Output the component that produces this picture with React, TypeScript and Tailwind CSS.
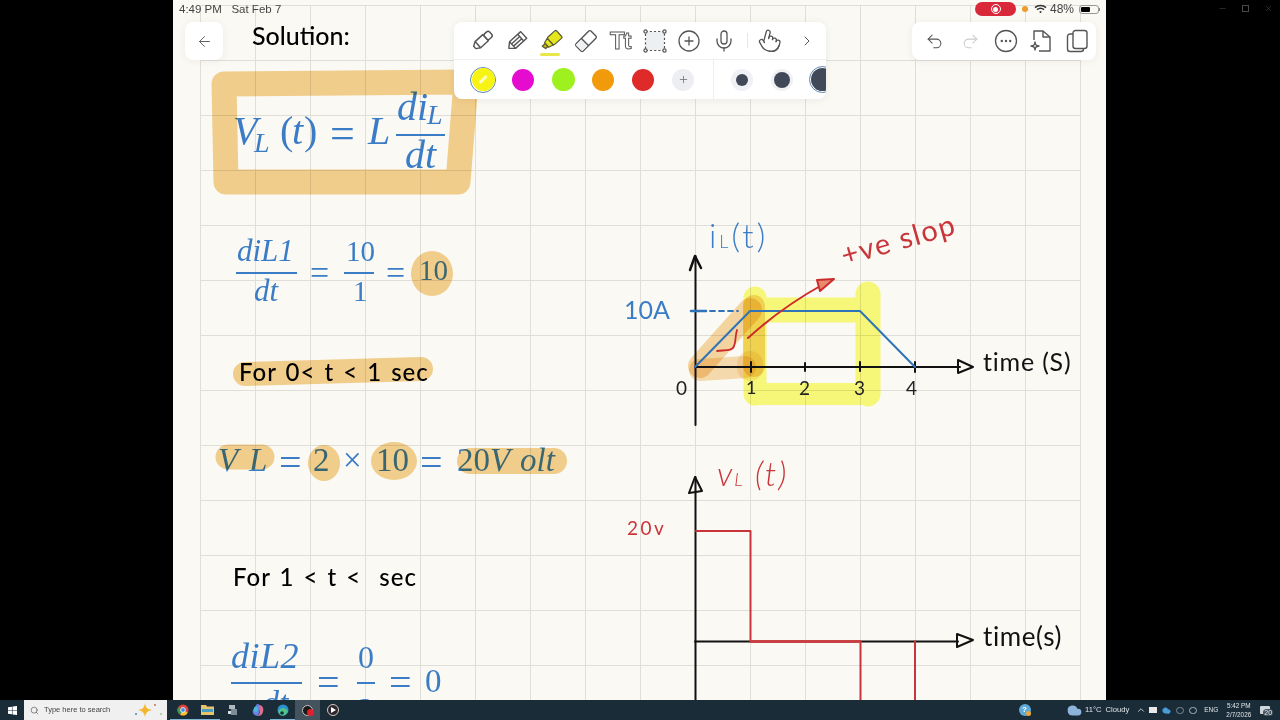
import React from "react";
import { ChevronRight, CirclePlus, Cloud, Mic, Pointer, Redo2, Search, Undo2, Plus, ArrowLeft, ChevronUp, Minus, X } from "lucide-react";

const Mathx = ({ className = "", children }: { className?: string; children: React.ReactNode }) => (
  <span className={"absolute whitespace-pre leading-none font-['Liberation_Serif',serif] text-[#3b7cc6] " + className}>{children}</span>
);
const Hand = ({ className = "", children }: { className?: string; children: React.ReactNode }) => (
  <span className={"absolute whitespace-pre leading-none font-['Lato',sans-serif] " + className}>{children}</span>
);
const Rule = ({ className = "" }: { className?: string }) => <div className={"absolute h-[2px] bg-[#3b7cc6] " + className} />;

function PenIcon({ fill = "none", stroke = "#555" }: { fill?: string; stroke?: string }) {
  return (
    <svg width="25" height="25" viewBox="0 0 24 24" fill={fill} stroke={stroke} strokeWidth="1.4" strokeLinejoin="round">
      <g transform="rotate(48 12 12)">
        <path d="M8 8 V18 L10.5 22 H13.5 L16 18 V8Z" />
        <rect x="8.5" y="1.5" width="7" height="6.5" rx="2" />
        <path d="M8 18 H16" />
      </g>
    </svg>
  );
}

function PencilIcon() {
  return (
    <svg width="24" height="24" viewBox="0 0 24 24" fill="none" stroke="#555" strokeWidth="1.4" strokeLinejoin="round">
      <g transform="rotate(48 12 12)">
        <path d="M7.5 3 H16.5 V18 L12 23 L7.5 18Z" />
        <path d="M7.5 7 H16.5 M7.5 18 H16.5 M10.5 7 V18 M13.5 7 V18" />
      </g>
    </svg>
  );
}

function HighlighterIcon() {
  return (
    <div className="relative w-[24px] h-[28px] flex items-start justify-center">
      <svg width="24" height="24" viewBox="0 0 24 24" fill="#e6e61e" stroke="#5a5a3a" strokeWidth="1.2" strokeLinejoin="round">
        <g transform="rotate(48 12 12)">
          <rect x="7" y="1" width="10" height="12" rx="1.5" />
          <path d="M7.5 13 H16.5 L15 18 H9Z" />
          <path d="M10 18 H14 V21 L10 22Z" fill="#c9b400" />
        </g>
      </svg>
      <div className="absolute left-[1px] bottom-[1px] w-[20px] h-[3px] rounded-full bg-[#e8e84a]" />
    </div>
  );
}

function EraserIcon() {
  return (
    <svg width="24" height="24" viewBox="0 0 24 24" fill="none" stroke="#555" strokeWidth="1.4" strokeLinejoin="round">
      <g transform="rotate(45 12 12)">
        <rect x="7" y="1.5" width="10" height="21" rx="1.5" fill="#fff" />
        <rect x="7.5" y="14" width="9" height="8" fill="#eef1f4" stroke="none" />
        <path d="M7 13.5 H17" />
      </g>
    </svg>
  );
}

function SelectIcon() {
  return (
    <svg width="24" height="24" viewBox="0 0 24 24" fill="none" stroke="#555" strokeWidth="1.2">
      <rect x="3" y="3" width="18" height="18" fill="#edf0f3" stroke="none" />
      <rect x="2.5" y="2.5" width="19" height="19" strokeDasharray="2.2 2" />
      <circle cx="2.5" cy="2.5" r="1.6" fill="#fff" />
      <circle cx="21.5" cy="2.5" r="1.6" fill="#fff" />
      <circle cx="2.5" cy="21.5" r="1.6" fill="#fff" />
      <circle cx="21.5" cy="21.5" r="1.6" fill="#fff" />
    </svg>
  );
}

function DocSparkle() {
  return (
    <svg width="24" height="24" viewBox="0 0 24 24" fill="none" stroke="#555" strokeWidth="1.4" strokeLinejoin="round">
      <path d="M5 11 V2 H14 L21 8 V22 H10" />
      <path d="M14 2 V8 H21" />
      <path d="M6 13 C6.5 16 7 16.5 10 17 C7 17.5 6.5 18 6 21 C5.5 18 5 17.5 2 17 C5 16.5 5.5 16 6 13Z" />
    </svg>
  );
}

function CopyIcon() {
  return (
    <svg width="24" height="24" viewBox="0 0 24 24" fill="none" stroke="#555" strokeWidth="1.4">
      <rect x="8" y="1.5" width="14" height="18" rx="2.5" />
      <path d="M8 5 H5 A2.5 2.5 0 0 0 2.5 7.5 V20 A2.5 2.5 0 0 0 5 22.5 H16 A2.5 2.5 0 0 0 18.5 20 V19.5" />
    </svg>
  );
}

function MoreIcon() {
  return (
    <svg width="24" height="24" viewBox="0 0 24 24" fill="none" stroke="#555" strokeWidth="1.3">
      <circle cx="12" cy="12" r="10.5" />
      <circle cx="7.8" cy="12" r="1.2" fill="#555" stroke="none" />
      <circle cx="12" cy="12" r="1.2" fill="#555" stroke="none" />
      <circle cx="16.2" cy="12" r="1.2" fill="#555" stroke="none" />
    </svg>
  );
}

function Toolbar() {
  return (
    <div className="absolute left-[281px] top-[22px] w-[372px] h-[77px] bg-white rounded-lg shadow-[0_1px_8px_rgba(0,0,0,0.07)] overflow-hidden flex flex-col">
      <div className="h-[38px] shrink-0 flex items-center pl-[11px] border-b border-[#f0f0f0]">
        <div className="w-[34.5px] shrink-0 flex justify-center"><PenIcon /></div>
        <div className="w-[34.5px] shrink-0 flex justify-center"><PencilIcon /></div>
        <div className="w-[34.5px] shrink-0 flex justify-center pt-[4px]"><HighlighterIcon /></div>
        <div className="w-[34.5px] shrink-0 flex justify-center"><EraserIcon /></div>
        <div className="w-[34.5px] shrink-0 flex justify-center">
          <span className="font-['Liberation_Sans',sans-serif] font-bold text-[24px] leading-none text-transparent [-webkit-text-stroke:1px_#555] tracking-[-1px]">Tt</span>
        </div>
        <div className="w-[34.5px] shrink-0 flex justify-center"><SelectIcon /></div>
        <div className="w-[34.5px] shrink-0 flex justify-center"><CirclePlus size={24} strokeWidth={1.3} color="#555" /></div>
        <div className="w-[34.5px] shrink-0 flex justify-center"><Mic size={24} strokeWidth={1.3} color="#555" /></div>
        <div className="ml-[6px] w-px h-[15px] shrink-0 bg-[#e6e6e6]" />
        <div className="ml-[5px] w-[34.5px] shrink-0 flex justify-center"><Pointer size={24} strokeWidth={1.3} color="#555" className="rotate-[15deg]" /></div>
        <div className="ml-[2px] w-[34.5px] shrink-0 flex justify-center"><ChevronRight size={16} strokeWidth={1.5} color="#555" /></div>
      </div>
      <div className="flex-1 flex items-center pl-[9px]">
        <div className="w-[40px] shrink-0 flex justify-center">
          <div className="w-[26px] h-[26px] rounded-full border border-[#5f85ad] bg-white flex items-center justify-center">
            <div className="w-[23px] h-[23px] rounded-full bg-[#f7f414] flex items-center justify-center">
              <div className="w-[10px] h-[2.5px] rounded-full bg-[#fdfcc0] -rotate-45" />
            </div>
          </div>
        </div>
        <div className="w-[40px] shrink-0 flex justify-center"><div className="w-[22px] h-[22px] rounded-full bg-[#e60ccf]" /></div>
        <div className="w-[40px] shrink-0 flex justify-center"><div className="w-[23px] h-[23px] rounded-full bg-[#9ff01f]" /></div>
        <div className="w-[40px] shrink-0 flex justify-center"><div className="w-[22px] h-[22px] rounded-full bg-[#f19a0b]" /></div>
        <div className="w-[40px] shrink-0 flex justify-center"><div className="w-[22px] h-[22px] rounded-full bg-[#df2a2a]" /></div>
        <div className="w-[40px] shrink-0 flex justify-center">
          <div className="w-[22px] h-[22px] rounded-full bg-[#eceef1] flex items-center justify-center"><Plus size={11} strokeWidth={1.6} color="#666" /></div>
        </div>
        <div className="ml-[10px] w-px shrink-0 self-stretch bg-[#eeeeee]" />
        <div className="ml-[8px] w-[40px] shrink-0 flex justify-center">
          <div className="w-[22px] h-[22px] rounded-full bg-[#eff1f4] flex items-center justify-center"><div className="w-[12px] h-[12px] rounded-full bg-[#414958]" /></div>
        </div>
        <div className="w-[40px] shrink-0 flex justify-center">
          <div className="w-[22px] h-[22px] rounded-full bg-[#eff1f4] flex items-center justify-center"><div className="w-[16px] h-[16px] rounded-full bg-[#414958]" /></div>
        </div>
        <div className="w-[40px] shrink-0 flex justify-center">
          <div className="w-[27px] h-[27px] rounded-full border border-[#5f85ad] bg-white flex items-center justify-center"><div className="w-[23px] h-[23px] rounded-full bg-[#414958]" /></div>
        </div>
      </div>
    </div>
  );
}

function Notes() {
  return (
    <>
      {/* blue formula block */}
      <Mathx className="left-[60px] top-[111px] text-[40px] italic">V</Mathx>
      <Mathx className="left-[81px] top-[129px] text-[28px] italic">L</Mathx>
      <Mathx className="left-[107px] top-[111px] text-[40px]">(</Mathx>
      <Mathx className="left-[119px] top-[111px] text-[40px] italic">t</Mathx>
      <Mathx className="left-[131px] top-[111px] text-[40px]">)</Mathx>
      <Mathx className="left-[157px] top-[112px] text-[44px]">=</Mathx>
      <Mathx className="left-[195px] top-[111px] text-[40px] italic">L</Mathx>
      <Mathx className="left-[224px] top-[87px] text-[40px] italic">di</Mathx>
      <Mathx className="left-[254px] top-[101px] text-[28px] italic">L</Mathx>
      <Rule className="left-[223px] top-[134px] w-[49px]" />
      <Mathx className="left-[232px] top-[135px] text-[40px] italic">dt</Mathx>

      <Mathx className="left-[64px] top-[235px] text-[31px] italic">diL1</Mathx>
      <Rule className="left-[63px] top-[272px] w-[61px]" />
      <Mathx className="left-[81px] top-[275px] text-[31px] italic">dt</Mathx>
      <Mathx className="left-[137px] top-[256px] text-[34px]">=</Mathx>
      <Mathx className="left-[173px] top-[237px] text-[29px]">10</Mathx>
      <Rule className="left-[171px] top-[272px] w-[30px]" />
      <Mathx className="left-[180px] top-[277px] text-[29px]">1</Mathx>
      <Mathx className="left-[213px] top-[256px] text-[34px]">=</Mathx>
      <Mathx className="left-[246px] top-[256px] text-[29px]">10</Mathx>

      <Hand className="left-[66px] top-[360px] text-[24px] font-medium text-black tracking-[1px] [word-spacing:2px]">For 0&lt; t &lt; 1 sec</Hand>

      <Mathx className="left-[45px] top-[444px] text-[33px] italic">V</Mathx>
      <Mathx className="left-[76px] top-[444px] text-[33px] italic">L</Mathx>
      <Mathx className="left-[106px] top-[443px] text-[40px]">=</Mathx>
      <Mathx className="left-[140px] top-[444px] text-[33px]">2</Mathx>
      <Mathx className="left-[170px] top-[444px] text-[33px]">×</Mathx>
      <Mathx className="left-[203px] top-[444px] text-[33px]">10</Mathx>
      <Mathx className="left-[247px] top-[443px] text-[40px]">=</Mathx>
      <Mathx className="left-[284px] top-[444px] text-[33px]">20</Mathx>
      <Mathx className="left-[317px] top-[444px] text-[33px] italic">V</Mathx>
      <Mathx className="left-[347px] top-[444px] text-[33px] italic">olt</Mathx>

      <Hand className="left-[60px] top-[565px] text-[24px] font-medium text-black tracking-[1px] [word-spacing:2px]">For 1 &lt; t &lt;  sec</Hand>

      <Mathx className="left-[58px] top-[638px] text-[36px] italic tracking-[0.5px]">diL2</Mathx>
      <Rule className="left-[58px] top-[682px] w-[71px]" />
      <Mathx className="left-[89px] top-[686px] text-[34px] italic">dt</Mathx>
      <Mathx className="left-[144px] top-[663px] text-[40px]">=</Mathx>
      <Mathx className="left-[185px] top-[641px] text-[32px]">0</Mathx>
      <Rule className="left-[184px] top-[682px] w-[18px]" />
      <Mathx className="left-[185px] top-[693px] text-[32px]">2</Mathx>
      <Mathx className="left-[216px] top-[663px] text-[40px]">=</Mathx>
      <Mathx className="left-[252px] top-[665px] text-[33px]">0</Mathx>

      {/* highlighter strokes */}
      <svg className="absolute inset-0 mix-blend-multiply pointer-events-none" width="933" height="700" viewBox="173 0 933 700" fill="none" strokeLinecap="round" strokeLinejoin="round">
        <path d="M224 84 L466 82 L458 182 L226 182Z" stroke="#f6d291" strokeWidth="25" />
        <ellipse cx="432" cy="273.5" rx="21" ry="22.5" fill="#f6d291" />
        <path d="M245 374 L421 369" stroke="#f6d291" strokeWidth="24" />
        <path d="M228 457 L262 457" stroke="#f6d291" strokeWidth="25" />
        <ellipse cx="324" cy="463" rx="16" ry="18" fill="#f6d291" />
        <ellipse cx="394" cy="461" rx="23" ry="19" fill="#f6d291" />
        <path d="M470 461 L554 461" stroke="#f6d291" strokeWidth="26" />
        {/* chart strokes */}
        <g className="mix-blend-multiply">
          <path d="M755 298 V394" stroke="#fbfd7e" strokeWidth="23" />
        </g>
        <path d="M760 310 H860" stroke="#fbfd7e" strokeWidth="25" />
        <path d="M868 294 V394" stroke="#fbfd7e" strokeWidth="25" />
        <path d="M760 394 H860" stroke="#fbfd7e" strokeWidth="22" />
        <g className="mix-blend-multiply">
          <path d="M700 366 L750 310" stroke="#f8d9a6" strokeWidth="24" />
        </g>
        <g className="mix-blend-multiply">
          <path d="M700 370 L745 367" stroke="#f9dfb4" strokeWidth="22" />
        </g>
        <g className="mix-blend-multiply">
          <path d="M754 306 V366" stroke="#f8d9a6" strokeWidth="22" />
        </g>
        <g className="mix-blend-multiply">
          <path d="M750 364 V368" stroke="#fbebcf" strokeWidth="26" />
        </g>
      </svg>

      {/* pen strokes: charts */}
      <svg className="absolute inset-0 pointer-events-none" width="933" height="700" viewBox="173 0 933 700" fill="none" strokeLinecap="round" strokeLinejoin="round">
        <g stroke="#111" strokeWidth="2">
          <path d="M695.5 256 V425" />
          <path d="M690 270 L695 256 L701 268" strokeWidth="2.5" />
          <path d="M695 367 H960" />
          <path d="M958 360 L973 367 L958 373Z" />
          <path d="M751 362 V372 M805 363 V371 M860 362 V371 M915 362 V372" />
          <path d="M695.5 477 V700" />
          <path d="M689 493 L695 477 L702 491Z" />
          <path d="M695 641.5 H958" />
          <path d="M957 634 L973 640 L957 647Z" />
        </g>
        <path d="M695 367 L750 311 H860 L915 367" stroke="#2f74b9" strokeWidth="2" />
        <path d="M691 311 H706" stroke="#2f74b9" strokeWidth="2.5" />
        <path d="M710 311 H738" stroke="#2f74b9" strokeWidth="1.8" strokeDasharray="5 4" />
        <path d="M748 338 C770 318 795 300 822 285" stroke="#cc2b2b" strokeWidth="2" />
        <path d="M817 280 L834 279 L820 291Z" stroke="#cc2b2b" strokeWidth="2" fill="#e88a70" />
        <path d="M717 351 C725 350 733 351 734 346 C736 342 735 336 737 330" stroke="#cc2b2b" strokeWidth="1.8" />
        <path d="M696 531 H750.5 V641.5 H860.5 V700 M915 641.5 V700" stroke="#c9343a" strokeWidth="2" />
        <path d="M751 641.5 H860" stroke="#cf3c40" strokeWidth="2.5" />
      </svg>

      {/* handwritten labels */}
      <Hand className="left-[536px] top-[219px] text-[33px] text-[#3b7cc6] font-light tracking-[3px]">i<span className="text-[18px]">L</span>(t)</Hand>
      <Hand className="left-[451px] top-[297px] text-[25px] text-[#3b7cc6]">10A</Hand>
      <Hand className="left-[666px] top-[224px] text-[29px] text-[#c8353a] -rotate-[16deg] tracking-[1.5px]">+ve slop</Hand>
      <Hand className="left-[503px] top-[378px] text-[19px] text-[#222]">0</Hand>
      <Hand className="left-[573px] top-[378px] text-[18px] text-[#222]">1</Hand>
      <Hand className="left-[626px] top-[378px] text-[19px] text-[#222]">2</Hand>
      <Hand className="left-[681px] top-[378px] text-[19px] text-[#222]">3</Hand>
      <Hand className="left-[733px] top-[378px] text-[19px] text-[#222]">4</Hand>
      <Hand className="left-[810px] top-[349px] text-[25px] text-[#111] tracking-[0.8px]">time (S)</Hand>
      <Hand className="left-[544px] top-[457px] text-[33px] text-[#c8353a] italic font-light tracking-[2px]">v<span className="text-[18px]">L</span> (t)</Hand>
      <Hand className="left-[454px] top-[518px] text-[19px] text-[#c8353a] tracking-[2.5px]">20v</Hand>
      <Hand className="left-[810px] top-[623px] text-[26px] text-[#111] tracking-[0.6px]">time(s)</Hand>

      <Hand className="left-[79px] top-[23px] text-[25px] font-medium text-black">Solution:</Hand>
    </>
  );
}

function Taskbar() {
  return (
    <div className="h-[20px] shrink-0 bg-[#1b2c39] flex items-stretch relative text-[#dfe5ea]">
      <div className="w-[24px] shrink-0 flex items-center justify-center">
        <svg width="9" height="9" viewBox="0 0 10 10" fill="#fff">
          <path d="M0 1.3 L4.4 .7 V4.7 H0Z M5 .6 L10 0 V4.7 H5Z M0 5.3 H4.4 V9.3 L0 8.7Z M5 5.3 H10 V10 L5 9.4Z" />
        </svg>
      </div>
      <div className="w-[143px] shrink-0 bg-[#f0f0f0] flex items-center relative">
        <Search size={9} className="ml-[6px] text-[#444]" strokeWidth={1.6} />
        <span className="ml-[5px] font-['Liberation_Sans',sans-serif] text-[7.5px] text-[#444]">Type here to search</span>
        <svg className="absolute left-[108px] top-[2px]" width="32" height="17" viewBox="0 0 32 17">
          <path d="M13 1 C14 6 15 7 20 8 C15 9 14 11 13 15 C12 11 11 9 6 8 C11 7 12 6 13 1Z" fill="#f3b62e" />
          <circle cx="23" cy="3" r="1" fill="#c9704a" />
          <circle cx="29" cy="12" r=".8" fill="#6aa64a" />
          <circle cx="4" cy="12" r="1" fill="#2a8fd0" />
        </svg>
      </div>
      <div className="ml-[3px] w-[25px] shrink-0 flex items-center justify-center border-b-[1.5px] border-[#7fb6d8]">
        <svg width="12" height="12" viewBox="0 0 12 12">
          <circle cx="6" cy="6" r="5.5" fill="#d8453a" />
          <path d="M6 6 L10.8 8.8 A5.5 5.5 0 0 1 3 10.6Z" fill="#f2c230" />
          <path d="M6 6 L3 10.6 A5.5 5.5 0 0 1 1 3.6Z" fill="#3a9a55" />
          <circle cx="6" cy="6" r="2.4" fill="#4a88e0" stroke="#fff" strokeWidth=".8" />
        </svg>
      </div>
      <div className="w-[25px] shrink-0 flex items-center justify-center border-b-[1.5px] border-[#7fb6d8]">
        <svg width="13" height="11" viewBox="0 0 13 11">
          <path d="M0 1 H5 L6 2.5 H13 V11 H0Z" fill="#e9c46a" />
          <rect x="1" y="5" width="11" height="3" fill="#4a9fc0" />
        </svg>
      </div>
      <div className="w-[25px] shrink-0 flex items-center justify-center">
        <svg width="12" height="12" viewBox="0 0 12 12" fill="#aeb9c2">
          <rect x="2" y="1" width="6" height="4" />
          <rect x="4" y="5" width="6" height="6" fill="#7e8c98" />
          <rect x="1" y="7" width="3" height="3" fill="#d5dde3" />
        </svg>
      </div>
      <div className="w-[25px] shrink-0 flex items-center justify-center">
        <svg width="12" height="12" viewBox="0 0 12 12">
          <path d="M5 0 C8 0 9 3 8 6 L6 12 C2 12 0 9 1 6Z" fill="#6b7fe8" />
          <path d="M7 1 C11 1 12 5 11 8 C10 11 8 12 6 12 C9 8 8 4 7 1Z" fill="#e0708a" />
          <path d="M2 4 C3 2 5 2 6 4 L5 8 C3 9 1 7 2 4Z" fill="#49b8d8" />
        </svg>
      </div>
      <div className="w-[25px] shrink-0 flex items-center justify-center border-b-[1.5px] border-[#7fb6d8]">
        <svg width="12" height="12" viewBox="0 0 12 12">
          <circle cx="6" cy="6" r="5.5" fill="#2b90cf" />
          <path d="M1 8 C3 3 8 3 11 7 A5.5 5.5 0 0 1 3 11Z" fill="#4fc38a" />
          <circle cx="5" cy="9" r="1.8" fill="#1b2c39" />
        </svg>
      </div>
      <div className="w-[25px] shrink-0 bg-[#44535e] flex items-center justify-center relative">
        <div className="w-[11px] h-[11px] rounded-full bg-[#1a1a1a] border border-[#c5c5c5]" />
        <div className="absolute left-[12px] top-[9px] w-[7px] h-[7px] rounded-full bg-[#e0202c]" />
      </div>
      <div className="w-[25px] shrink-0 flex items-center justify-center">
        <div className="w-[12px] h-[12px] rounded-full bg-[#2c2630] border border-[#d8c8b8] flex items-center justify-center">
          <div className="w-0 h-0 border-y-[3px] border-y-transparent border-l-[5px] border-l-white ml-[1px]" />
        </div>
      </div>

      <div className="ml-auto w-[262px] shrink-0 flex items-stretch">
        <div className="w-[13px] shrink-0 flex items-center justify-center">
          <div className="relative w-[12px] h-[12px] rounded-full bg-[#5fa9d8] text-[8px] leading-[12px] text-center font-bold font-['Liberation_Sans',sans-serif] text-white">?
            <div className="absolute right-0 bottom-0 w-[5px] h-[5px] rounded-full bg-[#e8a93a]" />
          </div>
        </div>
        <div className="ml-[36px] shrink-0 flex items-center">
          <Cloud size={15} fill="#8fb4dc" color="#8fb4dc" />
          <span className="ml-[3px] font-['Liberation_Sans',sans-serif] text-[7.6px] whitespace-pre">11°C  Cloudy</span>
        </div>
        <div className="ml-[7px] shrink-0 flex items-center"><ChevronUp size={10} /></div>
        <div className="ml-[3px] shrink-0 flex items-center gap-[5px]">
          <div className="w-[8px] h-[6px] bg-[#e8e8e8]" />
          <Cloud size={9} fill="#4a9ed8" color="#4a9ed8" />
          <div className="w-[8px] h-[7px] border border-[#7b8a95] rounded-full" />
          <div className="w-[8px] h-[7px] border border-[#aab4bc] rounded-sm" />
        </div>
        <span className="ml-[7px] shrink-0 self-center font-['Liberation_Sans',sans-serif] text-[6.5px]">ENG</span>
        <div className="ml-[8px] shrink-0 flex flex-col items-center justify-center font-['Liberation_Sans',sans-serif] text-[6.4px] leading-[9px]">
          <span>5:42 PM</span>
          <span>2/7/2026</span>
        </div>
        <div className="ml-[9px] shrink-0 flex items-center relative">
          <div className="w-[10px] h-[8px] bg-[#cfd6db] rounded-[1px]" />
          <span className="absolute left-[3px] top-[9px] text-[7px] leading-none bg-[#45535d] rounded-sm px-[1px] font-['Liberation_Sans',sans-serif]">20</span>
        </div>
      </div>
    </div>
  );
}

export default function App() {
  return (
    <div className="w-[1280px] h-[720px] bg-black flex flex-col overflow-hidden">
      <div className="flex-1 min-h-0 flex">
        <div className="w-[173px] shrink-0" />
        <main className="relative w-[933px] shrink-0 bg-[#faf9f4] overflow-hidden">
          <div className="absolute left-[27px] top-[5px] w-[881px] h-[695px] bg-[linear-gradient(to_right,#dfded9_1px,transparent_1px),linear-gradient(to_bottom,#dfded9_1px,transparent_1px)] bg-[size:55px_55px]" />
          <Notes />
          <div className="absolute left-[12px] top-[22px] w-[38px] h-[38px] bg-white rounded-lg shadow-[0_1px_8px_rgba(0,0,0,0.06)] flex items-center justify-center">
            <ArrowLeft size={17} strokeWidth={1.3} color="#555" />
          </div>
          <span className="absolute left-[6px] top-[3px] font-['Liberation_Sans',sans-serif] text-[11.5px] leading-[12px] whitespace-pre text-[#444]">4:49 PM   Sat Feb 7</span>
          <Toolbar />
          <div className="absolute left-[739px] top-[22px] w-[184px] h-[38px] bg-white rounded-lg shadow-[0_1px_8px_rgba(0,0,0,0.06)] flex items-center pl-[5px]">
            <div className="w-[35.5px] shrink-0 flex justify-center"><Undo2 size={19} strokeWidth={1.3} color="#555" /></div>
            <div className="w-[35.5px] shrink-0 flex justify-center"><Redo2 size={19} strokeWidth={1.3} color="#ccc" /></div>
            <div className="w-[35.5px] shrink-0 flex justify-center"><MoreIcon /></div>
            <div className="w-[35.5px] shrink-0 flex justify-center"><DocSparkle /></div>
            <div className="w-[35.5px] shrink-0 flex justify-center"><CopyIcon /></div>
          </div>
          <div className="absolute left-[802px] top-[2px] h-[14px] flex items-center">
            <div className="w-[41px] h-[14px] rounded-full bg-[#d9283a] flex items-center justify-center">
              <div className="w-[10px] h-[10px] rounded-full border border-white flex items-center justify-center"><div className="w-[5px] h-[5px] rounded-full bg-white" /></div>
            </div>
            <div className="ml-[6px] w-[6px] h-[6px] rounded-full bg-[#ee9b2c]" />
            <svg className="ml-[6px]" width="13" height="10" viewBox="0 0 13 10" fill="none" stroke="#333" strokeWidth="1.5">
              <path d="M1 3.6 C4 .8 9 .8 12 3.6 M3 5.6 C5 4 8 4 10 5.6" />
              <circle cx="6.5" cy="8" r="1" fill="#333" stroke="none" />
            </svg>
            <span className="ml-[3px] font-['Liberation_Sans',sans-serif] text-[12px] text-[#444] leading-none">48%</span>
            <div className="ml-[5px] w-[20px] h-[9px] rounded-[3px] border border-[#999] p-px flex">
              <div className="w-[9px] bg-black rounded-[1px]" />
            </div>
            <div className="w-[1px] h-[3px] bg-[#888]" />
          </div>
        </main>
        <div className="flex-1 flex items-start justify-end gap-[15px] pt-[4px] pr-[7px] text-[#4a4a4a]">
          <Minus size={9} strokeWidth={1.4} />
          <div className="w-[7px] h-[7px] mt-[1px] border border-[#4a4a4a]" />
          <X size={9} strokeWidth={1.4} />
        </div>
      </div>
      <Taskbar />
    </div>
  );
}
